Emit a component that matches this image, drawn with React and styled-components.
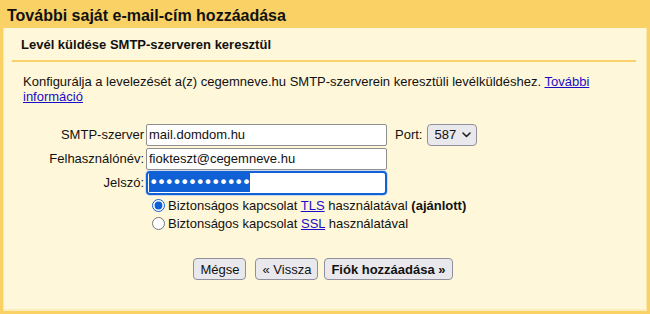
import React, { useEffect, useRef } from "react";
import styled, { createGlobalStyle } from "styled-components";

const GlobalStyle = createGlobalStyle`
  html, body {
    margin: 0;
    padding: 0;
    background: #fad165;
  }
  body {
    font-family: "Liberation Sans", Arial, sans-serif;
    font-size: 13px;
    color: #000;
  }
`;

function Chevron() {
  return (
    <svg width="9" height="6" viewBox="0 0 9 6">
      <polyline
        points="1,1 4.5,4.5 8,1"
        fill="none"
        stroke="#222"
        strokeWidth="1.6"
        strokeLinecap="round"
        strokeLinejoin="round"
      />
    </svg>
  );
}

export default function App() {
  const pwRef = useRef(null);

  useEffect(() => {
    if (pwRef.current) {
      pwRef.current.focus();
      pwRef.current.select();
    }
  }, []);

  return (
    <Frame>
      <GlobalStyle />
      <TitleBar>További saját e-mail-cím hozzáadása</TitleBar>
      <Panel>
        <SubHead>Levél küldése SMTP-szerveren keresztül</SubHead>
        <Intro>
          Konfigurálja a levelezését a(z) cegemneve.hu SMTP-szerverein
          keresztüli levélküldéshez. <Link href="#">További információ</Link>
        </Intro>

        <Form>
          <FieldRow>
            <Label>SMTP-szerver</Label>
            <TextInput readOnly value="mail.domdom.hu" />
            <PortLabel>Port:</PortLabel>
            <SelectBox>
              <span>587</span>
              <Chevron />
            </SelectBox>
          </FieldRow>
          <FieldRow>
            <Label>Felhasználónév:</Label>
            <TextInput readOnly value="fiokteszt@cegemneve.hu" />
          </FieldRow>
          <FieldRow>
            <Label>Jelszó:</Label>
            <PasswordInput
              ref={pwRef}
              type="password"
              readOnly
              value="jelszojelszo1"
            />
          </FieldRow>

          <RadioGroup>
            <RadioRow>
              <Radio type="radio" name="sec" defaultChecked />
              <span>
                Biztonságos kapcsolat <Link href="#">TLS</Link> használatával{" "}
                <b>(ajánlott)</b>
              </span>
            </RadioRow>
            <RadioRow>
              <Radio type="radio" name="sec" />
              <span>
                Biztonságos kapcsolat <Link href="#">SSL</Link> használatával
              </span>
            </RadioRow>
          </RadioGroup>
        </Form>

        <Buttons>
          <Button spaced>Mégse</Button>
          <Button>« Vissza</Button>
          <Button primary>Fiók hozzáadása »</Button>
        </Buttons>
      </Panel>
    </Frame>
  );
}

const Frame = styled.div`
  width: 650px;
  height: 314px;
  box-sizing: border-box;
  padding: 0 3px 3px 3px;
  background: #fad165;
  display: flex;
  flex-direction: column;
`;

const TitleBar = styled.div`
  height: 28px;
  box-sizing: border-box;
  padding: 3px 0 0 4px;
  line-height: 25px;
  font-size: 16px;
  font-weight: bold;
  color: #111;
`;

const Panel = styled.div`
  flex: 1;
  background: #fff7da;
  box-shadow: inset 1px 0 0 #fde7a6, inset -1px 0 0 #fde7a6,
    inset 0 -2px 0 #fdedbd;
  padding: 0 11px 0 9px;
  display: flex;
  flex-direction: column;
`;

const SubHead = styled.div`
  padding: 9px 0 8px 9px;
  line-height: 15px;
  font-size: 13px;
  font-weight: bold;
  color: #111;
  border-bottom: 2px solid #fbd169;
`;

const Intro = styled.p`
  margin: 12px 0 0 11px;
  line-height: 15px;
  color: #111;
`;

const Link = styled.a`
  color: #1a0dc8;
  text-decoration: underline;
`;

const Form = styled.div`
  margin: 19px 0 0 11px;
  display: flex;
  flex-direction: column;
  gap: 1px;
`;

const FieldRow = styled.div`
  display: flex;
  align-items: center;
  height: 23px;
`;

const Label = styled.label`
  width: 121px;
  margin-right: 2px;
  text-align: right;
  white-space: nowrap;
  color: #111;
`;

const TextInput = styled.input`
  width: 241px;
  height: 22px;
  box-sizing: border-box;
  padding: 1px 2px;
  border: 1px solid #8f8f8f;
  border-radius: 2px;
  background: #fff;
  font-family: "Liberation Sans", Arial, sans-serif;
  font-size: 13px;
  color: #111;
  outline: none;
`;

const PasswordInput = styled(TextInput)`
  height: 24px;
  padding: 0 1px;
  border: 2px solid #1062d6;
  border-radius: 4px;
  box-shadow: 0 0 0 1px #cfd9e8;
  font-family: "DejaVu Sans", sans-serif;
  font-size: 16px;
  letter-spacing: -1.7px;
  &::selection {
    background: #0f5fd5;
    color: #fff;
  }
`;

const PortLabel = styled.span`
  margin-left: 8px;
  margin-right: 5px;
  color: #111;
`;

const SelectBox = styled.div`
  width: 50px;
  height: 22px;
  box-sizing: border-box;
  display: flex;
  align-items: center;
  gap: 6px;
  padding: 0 0 0 6px;
  background: #e9e9ed;
  border: 1px solid #8f8f9d;
  border-radius: 4px;
  color: #111;
`;

const RadioGroup = styled.div`
  margin: 1px 0 0 123px;
  display: flex;
  flex-direction: column;
`;

const RadioRow = styled.label`
  display: flex;
  align-items: center;
  height: 18px;
  color: #111;
`;

const Radio = styled.input`
  width: 13px;
  height: 13px;
  margin: 0 3px 0 6px;
  accent-color: #0f5fd5;
`;

const Buttons = styled.div`
  margin-top: 26px;
  display: flex;
  justify-content: center;
  gap: 6px;
  padding-right: 2px;
`;

const Button = styled.button`
  height: 22px;
  padding: 0 6px;
  margin-right: ${(p) => (p.spaced ? "3px" : "0")};
  background: #e9e9ed;
  border: 1px solid #8f8f9d;
  border-radius: 4px;
  font-family: "Liberation Sans", Arial, sans-serif;
  font-size: 13px;
  font-weight: ${(p) => (p.primary ? "bold" : "normal")};
  color: #111;
  cursor: pointer;
`;
